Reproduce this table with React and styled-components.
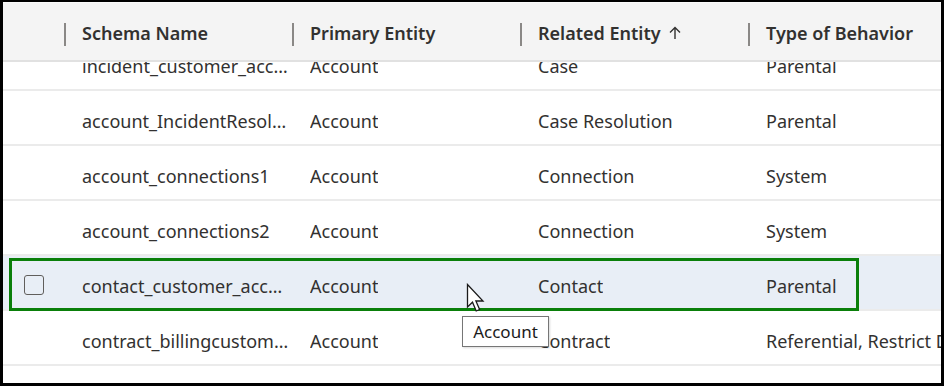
import React from 'react'
import styled, { createGlobalStyle } from 'styled-components'

const Global = createGlobalStyle`
  html, body { margin: 0; padding: 0; background: #000; }
  * { box-sizing: border-box; }
`

const Frame = styled.div`
  position: relative;
  width: 944px;
  height: 386px;
  border-style: solid;
  border-color: #000;
  border-width: 2px 3px 3px 3px;
  background: #fff;
  overflow: hidden;
  font-family: "Noto Sans", "Open Sans", sans-serif;
  color: #323130;
`

const cols = '61px 228px 228px 228px 420px'

const Header = styled.div`
  display: grid;
  grid-template-columns: ${cols};
  height: 60px;
  background: #f4f4f4;
  border-top: 1px solid #fafafa;
  border-bottom: 2px solid #e1e1e1;
  position: relative;
  z-index: 2;
`

const HeadCell = styled.div`
  display: flex;
  align-items: center;
  gap: 6px;
  padding: 2px 0 0 ${p => (p.$blank ? 0 : 16)}px;
  font-size: 18px;
  font-weight: 600;
  white-space: nowrap;
  border-left: ${p => (p.$blank ? 'none' : '2px solid transparent')};
  position: relative;
  &::before {
    content: '';
    display: ${p => (p.$blank ? 'none' : 'block')};
    position: absolute;
    left: -2px;
    top: 20px;
    width: 2px;
    height: 23px;
    background: #8a8886;
  }
`

const SortArrow = styled.svg`
  width: 14px;
  height: 16px;
  margin-left: 1px;
`

const Body = styled.div`
  height: 319px;
  overflow: hidden;
`

const Rows = styled.div`
  margin-top: -26px;
`

const Row = styled.div`
  display: grid;
  grid-template-columns: ${cols};
  height: 55px;
  border-bottom: 2px solid #ebebeb;
  background: ${p => (p.$selected ? '#e8eef6' : '#fff')};
`

const Cell = styled.div`
  display: flex;
  align-items: center;
  padding: 7px 1px 0 18px;
  font-size: 18px;
  min-width: 0;
  span {
    white-space: nowrap;
    overflow: hidden;
    text-overflow: ellipsis;
  }
`

const CheckCell = styled.div`
  display: flex;
  align-items: center;
  padding: 5px 0 0 21px;
`

const Box = styled.div`
  width: 20px;
  height: 20px;
  border: 1.5px solid #605e5c;
  border-radius: 3px;
`

const Highlight = styled.div`
  position: absolute;
  left: 6px;
  top: 256px;
  width: 850px;
  height: 53px;
  border: 3px solid #0a7f0a;
  pointer-events: none;
  z-index: 3;
`

const Pointer = styled.svg`
  position: absolute;
  left: 463px;
  top: 281px;
  width: 22px;
  height: 32px;
  z-index: 4;
`

const Tooltip = styled.div`
  position: absolute;
  left: 459px;
  top: 314px;
  width: 87px;
  height: 31px;
  background: #fff;
  border: 1px solid #767676;
  box-shadow: 1px 1px 2px rgba(0,0,0,0.15);
  font-family: "Noto Sans", "Open Sans", sans-serif;
  font-size: 17px;
  color: #1b1b1b;
  display: flex;
  align-items: center;
  justify-content: center;
  z-index: 4;
`

const data = [
  ['incident_customer_accounts', 'Account', 'Case', 'Parental'],
  ['account_IncidentResolutions', 'Account', 'Case Resolution', 'Parental'],
  ['account_connections1', 'Account', 'Connection', 'System'],
  ['account_connections2', 'Account', 'Connection', 'System'],
  ['contact_customer_accounts', 'Account', 'Contact', 'Parental', true],
  ['contract_billingcustomer_accounts', 'Account', 'Contract', 'Referential, Restrict Delete'],
]

export default function App() {
  return (
    <>
      <Global />
      <Frame>
        <Header>
          <HeadCell $blank />
          <HeadCell>Schema Name</HeadCell>
          <HeadCell>Primary Entity</HeadCell>
          <HeadCell>
            Related Entity
            <SortArrow viewBox="0 0 14 16">
              <path d="M7 14V2.5M2 7.5L7 2.5l5 5" fill="none" stroke="#323130" strokeWidth="1.4" />
            </SortArrow>
          </HeadCell>
          <HeadCell>Type of Behavior</HeadCell>
        </Header>
        <Body>
          <Rows>
            {data.map(([schema, primary, related, type, sel]) => (
              <Row key={schema} $selected={sel}>
                <CheckCell>{sel && <Box />}</CheckCell>
                <Cell><span>{schema}</span></Cell>
                <Cell><span>{primary}</span></Cell>
                <Cell><span>{related}</span></Cell>
                <Cell><span>{type}</span></Cell>
              </Row>
            ))}
          </Rows>
        </Body>
        <Highlight />
        <Pointer viewBox="0 0 22 32">
          <path
            d="M1.5 1.5 L1.5 24 L6.5 19.2 L10.2 28 L13.6 26.5 L9.9 18 L17 18 Z"
            fill="#fff"
            stroke="#1a1a1a"
            strokeWidth="1.3"
            strokeLinejoin="miter"
          />
        </Pointer>
        <Tooltip>Account</Tooltip>
      </Frame>
    </>
  )
}
